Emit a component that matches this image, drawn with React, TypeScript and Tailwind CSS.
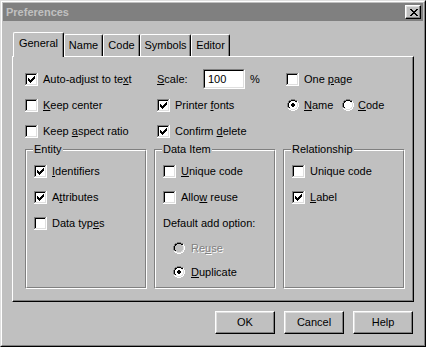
import React from "react";

const PAL: Record<string, string> = {
  G: "#808080",
  K: "#000000",
  W: "#ffffff",
  L: "#dfdfdf",
  S: "#c0c0c0",
};

function Pix({ rows }: { rows: string[] }) {
  const w = rows[0].length;
  const h = rows.length;
  const rects: React.ReactNode[] = [];
  rows.forEach((r, y) => {
    let x = 0;
    while (x < r.length) {
      const ch = r[x];
      let e = x;
      while (e < r.length && r[e] === ch) e++;
      if (ch !== ".") {
        rects.push(<rect key={`${x}-${y}`} x={x} y={y} width={e - x} height={1} fill={PAL[ch]} />);
      }
      x = e;
    }
  });
  return (
    <svg width={w} height={h} viewBox={`0 0 ${w} ${h}`} shapeRendering="crispEdges" className="block shrink-0">
      {rects}
    </svg>
  );
}

const CHECK = ["......K", ".....KK", "K...KKK", "KK.KKK.", "KKKKK..", ".KKK...", "..K...."];

function boxRows(checked: boolean) {
  const rows = ["GGGGGGGGGGGGW", "GKKKKKKKKKKLW"];
  for (let i = 0; i < 9; i++) rows.push("GKWWWWWWWWWLW");
  rows.push("GLLLLLLLLLLLW", "WWWWWWWWWWWWW");
  if (!checked) return rows;
  return rows.map((r, y) => {
    if (y < 3 || y > 9) return r;
    const c = CHECK[y - 3];
    return r.slice(0, 3) + c.split("").map((p, i) => (p === "K" ? "K" : r[3 + i])).join("") + r.slice(10);
  });
}

function radioRows(selected: boolean, disabled: boolean) {
  const base = [
    "....GGGG....",
    "..GGKKKKGG..",
    ".GKKIIIIKKW.",
    ".GKIIIIIILW.",
    "GKIIIIIIIILW",
    "GKIIIIIIIILW",
    "GKIIIIIIIILW",
    "GKIIIIIIIILW",
    ".GKIIIIIILW.",
    ".WLLIIIILLW.",
    "..WWLLLLWW..",
    "....WWWW....",
  ];
  const dot = ["....", ".KK.", "KKKK", "KKKK", ".KK."];
  return base.map((r, y) => {
    let row = r.replace(/I/g, disabled ? "S" : "W");
    if (selected && y >= 4 && y <= 7) {
      const d = dot[y - 3];
      row = row.slice(0, 4) + d.split("").map((p, i) => (p === "K" ? "K" : row[4 + i])).join("") + row.slice(8);
    }
    return row;
  });
}

const CLOSE_X = ["KK....KK", ".KK..KK.", "..KKKK..", "...KK...", "..KKKK..", ".KK..KK.", "KK....KK"];

function Label({ text, ul }: { text: string; ul?: number }) {
  if (ul === undefined) return <span className="whitespace-nowrap">{text}</span>;
  return (
    <span className="whitespace-nowrap">
      {text.slice(0, ul)}
      <span className="underline underline-offset-[1px]">{text[ul]}</span>
      {text.slice(ul + 1)}
    </span>
  );
}

function Check({ text, ul, checked = false }: { text: string; ul?: number; checked?: boolean }) {
  return (
    <div className="flex h-[26px] items-center gap-[5px]">
      <Pix rows={boxRows(checked)} />
      <Label text={text} ul={ul} />
    </div>
  );
}

function Radio({ text, ul, selected = false, disabled = false }: { text: string; ul?: number; selected?: boolean; disabled?: boolean }) {
  return (
    <div className={`flex items-center gap-[6px] ${disabled ? "text-[#808080] [text-shadow:1px_1px_0_#ffffff]" : ""}`}>
      <Pix rows={radioRows(selected, disabled)} />
      <Label text={text} ul={ul} />
    </div>
  );
}

function GroupBox({ title, children }: { title: string; children: React.ReactNode }) {
  return (
    <div className="relative h-[140px] border border-t-[#808080] border-l-[#808080] border-r-white border-b-white">
      <div className="h-full border border-t-white border-l-white border-r-[#808080] border-b-[#808080] pl-[7px] pt-[7px]">
        {children}
      </div>
      <span className="absolute -top-[7px] left-[7px] bg-[#c0c0c0] px-[1px] leading-[13px]">{title}</span>
    </div>
  );
}

function Button({ text }: { text: string }) {
  return (
    <div className="flex h-[23px] w-[60px] items-center justify-center border border-t-white border-l-white border-r-black border-b-black shadow-[inset_-1px_-1px_0_#808080,inset_1px_1px_0_#dfdfdf]">
      {text}
    </div>
  );
}

const tabs = [
  { name: "General", w: "w-[51px]" },
  { name: "Name", w: "w-[39px]" },
  { name: "Code", w: "w-[37px]" },
  { name: "Symbols", w: "w-[51px]" },
  { name: "Editor", w: "w-[39px]" },
];

export default function App() {
  return (
    <div className="h-[347px] w-[426px] bg-[#c0c0c0] font-['Liberation_Sans',Arial,sans-serif] text-[11px] leading-[13px] text-black">
      <div className="h-full border border-t-[#dfdfdf] border-l-[#dfdfdf] border-r-black border-b-black">
        <div className="flex h-full flex-col border border-t-white border-l-white border-r-[#808080] border-b-[#808080] p-[1px]">
          {/* title bar */}
          <div className="flex h-[18px] shrink-0 items-center justify-between bg-[#808080] pl-[3px] pr-[2px]">
            <span className="font-bold text-[#c0c0c0]">Preferences</span>
            <div className="flex h-[14px] w-[16px] items-center justify-center border border-t-white border-l-white border-r-black border-b-black bg-[#c0c0c0] pl-[1px] shadow-[inset_-1px_-1px_0_#808080,inset_1px_1px_0_#dfdfdf]">
              <Pix rows={CLOSE_X} />
            </div>
          </div>

          <div className="flex flex-col px-[9px]">
            {/* tabs */}
            <div className="mt-[11px] flex h-[24px] items-end pl-[1px]">
              {tabs.map((t, i) =>
                i === 0 ? (
                  <div
                    key={t.name}
                    className={`relative z-10 -mb-px flex h-[25px] ${t.w} items-center justify-center rounded-t-[2px] border-l border-t border-r border-l-white border-t-white border-r-black bg-[#c0c0c0] pb-[3px] shadow-[inset_-1px_0_0_#808080]`}
                  >
                    {t.name}
                  </div>
                ) : (
                  <div
                    key={t.name}
                    className={`flex h-[22px] ${t.w} items-center justify-center rounded-t-[2px] border-l border-t border-r border-l-white border-t-white border-r-black shadow-[inset_-1px_0_0_#808080]`}
                  >
                    {t.name}
                  </div>
                )
              )}
            </div>

            {/* panel */}
            <div className="h-[246px] border border-t-white border-l-white border-r-black border-b-black pl-[12px] pt-[9px] shadow-[inset_-1px_-1px_0_#808080]">
              <div className="grid grid-cols-[132px_129px_1fr]">
                <Check text="Auto-adjust to text" ul={17} checked />
                <div className="flex h-[26px] items-center">
                  <span className="w-[46px]">
                    <Label text="Scale:" ul={0} />
                  </span>
                  <div className="h-[20px] w-[42px] border border-t-[#808080] border-l-[#808080] border-r-white border-b-white">
                    <div className="flex h-full items-center border border-t-black border-l-black border-r-[#dfdfdf] border-b-[#dfdfdf] bg-white pl-[3px]">
                      100
                    </div>
                  </div>
                  <span className="ml-[5px]">%</span>
                </div>
                <Check text="One page" ul={4} />

                <Check text="Keep center" ul={0} />
                <Check text="Printer fonts" ul={8} checked />
                <div className="flex h-[26px] items-center pl-[1px]">
                  <div className="flex w-[55px] items-center gap-[5px]">
                    <Pix rows={radioRows(true, false)} />
                    <Label text="Name" ul={0} />
                  </div>
                  <div className="flex items-center gap-[4px]">
                    <Pix rows={radioRows(false, false)} />
                    <Label text="Code" ul={0} />
                  </div>
                </div>

                <Check text="Keep aspect ratio" ul={5} />
                <Check text="Confirm delete" ul={8} checked />
                <div />
              </div>

              <div className="mt-[5px] grid grid-cols-[122px_122px_122px] gap-[7px]">
                <GroupBox title="Entity">
                  <Check text="Identifiers" ul={0} checked />
                  <Check text="Attributes" ul={1} checked />
                  <Check text="Data types" ul={8} />
                </GroupBox>
                <GroupBox title="Data Item">
                  <Check text="Unique code" ul={0} />
                  <Check text="Allow reuse" ul={4} />
                  <div className="flex h-[26px] items-center">Default add option:</div>
                  <div className="flex h-[24px] items-center pl-[10px]">
                    <Radio text="Reuse" ul={2} disabled />
                  </div>
                  <div className="flex h-[24px] items-center pl-[10px]">
                    <Radio text="Duplicate" ul={0} selected />
                  </div>
                </GroupBox>
                <GroupBox title="Relationship">
                  <Check text="Unique code" />
                  <Check text="Label" ul={0} checked />
                </GroupBox>
              </div>
            </div>

            {/* buttons */}
            <div className="mt-[9px] flex justify-end gap-[9px] pr-[1px]">
              <Button text="OK" />
              <Button text="Cancel" />
              <Button text="Help" />
            </div>
          </div>
        </div>
      </div>
    </div>
  );
}
